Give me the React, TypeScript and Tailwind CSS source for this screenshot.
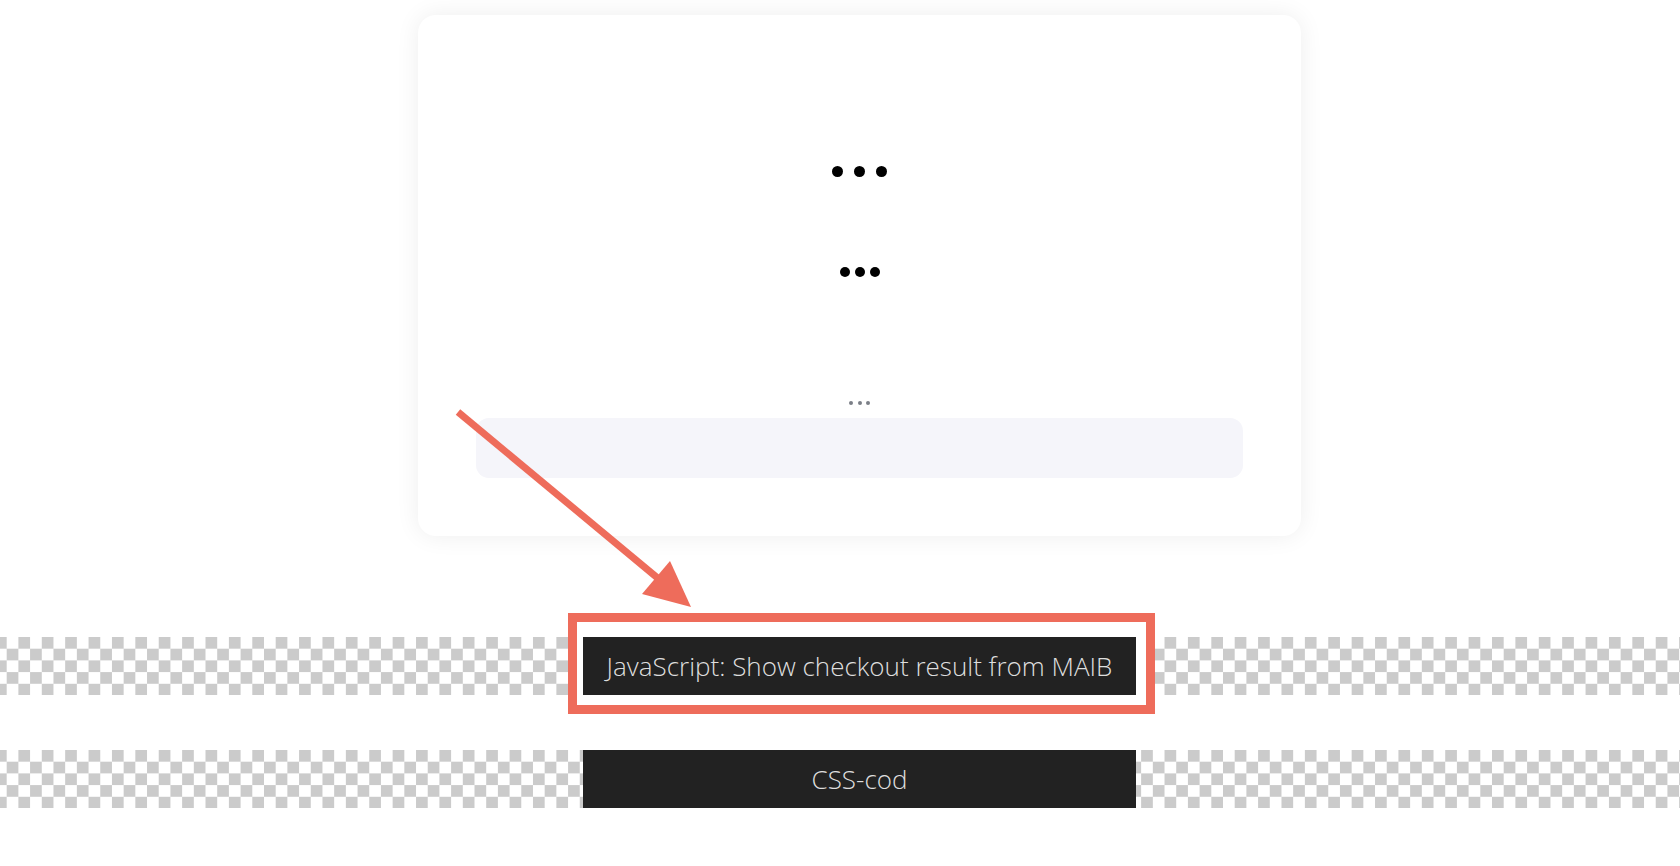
import React from "react";

function Dots({ size, gap, color }: { size: string; gap: string; color: string }) {
  return (
    <div className={`flex items-center justify-center ${gap}`}>
      {[0, 1, 2].map((i) => (
        <span key={i} className={`block rounded-full ${size} ${color}`} />
      ))}
    </div>
  );
}

function CheckerBand({ label }: { label: string }) {
  return (
    <div className="flex h-[58px] w-full justify-center bg-[conic-gradient(#cbcbcb_25%,#ffffff_0_50%,#cbcbcb_0_75%,#ffffff_0)] bg-[length:23.4px_23.4px] bg-[position:6.7px_0px] pl-[39px]">
      <div className="relative z-10 flex w-[553px] items-center justify-center bg-[#222222]">
        <span className="text-[26px] font-light leading-none text-[#dedede]">
          {label}
        </span>
      </div>
    </div>
  );
}

export default function App() {
  return (
    <div
      className="relative min-h-[866px] w-full overflow-hidden bg-white"
      style={{ fontFamily: '"Open Sans", "Liberation Sans", sans-serif' }}
    >
      <div className="flex flex-col items-center pl-[39px] pt-[15px]">
        <div className="flex h-[521px] w-[883px] flex-col items-center rounded-[18px] bg-white px-[58px] shadow-[0_0_24px_rgba(0,0,0,0.07)]">
          <div className="mt-[151px]">
            <Dots size="h-[11px] w-[11px]" gap="gap-[11px]" color="bg-black" />
          </div>
          <div className="mt-[90px]">
            <Dots size="h-[10px] w-[10px]" gap="gap-[5px]" color="bg-black" />
          </div>
          <div className="mt-[124px]">
            <Dots size="h-[4px] w-[4px]" gap="gap-[4.5px]" color="bg-[#7b7f87]" />
          </div>
          <div className="mt-[13px] h-[60px] w-full rounded-[13px] bg-[#f5f5fa]" />
        </div>
      </div>

      <div className="mt-[101px] flex flex-col gap-[55px]">
        <CheckerBand label="JavaScript: Show checkout result from MAIB" />
        <CheckerBand label="CSS-cod" />
      </div>

      {/* highlight frame around the first button */}
      <div className="pointer-events-none absolute left-[568px] top-[613px] z-[5] h-[101px] w-[587px] border-[9px] border-[#ee6c5b] bg-white" />

      {/* pointer arrow */}
      <svg
        className="pointer-events-none absolute left-[450px] top-[400px] z-20"
        width="250"
        height="215"
        viewBox="0 0 250 215"
      >
        <line
          x1="8"
          y1="12"
          x2="210"
          y2="180"
          stroke="#ee6c5b"
          strokeWidth="7"
        />
        <polygon points="241,207 220,161 192,194" fill="#ee6c5b" />
      </svg>
    </div>
  );
}
